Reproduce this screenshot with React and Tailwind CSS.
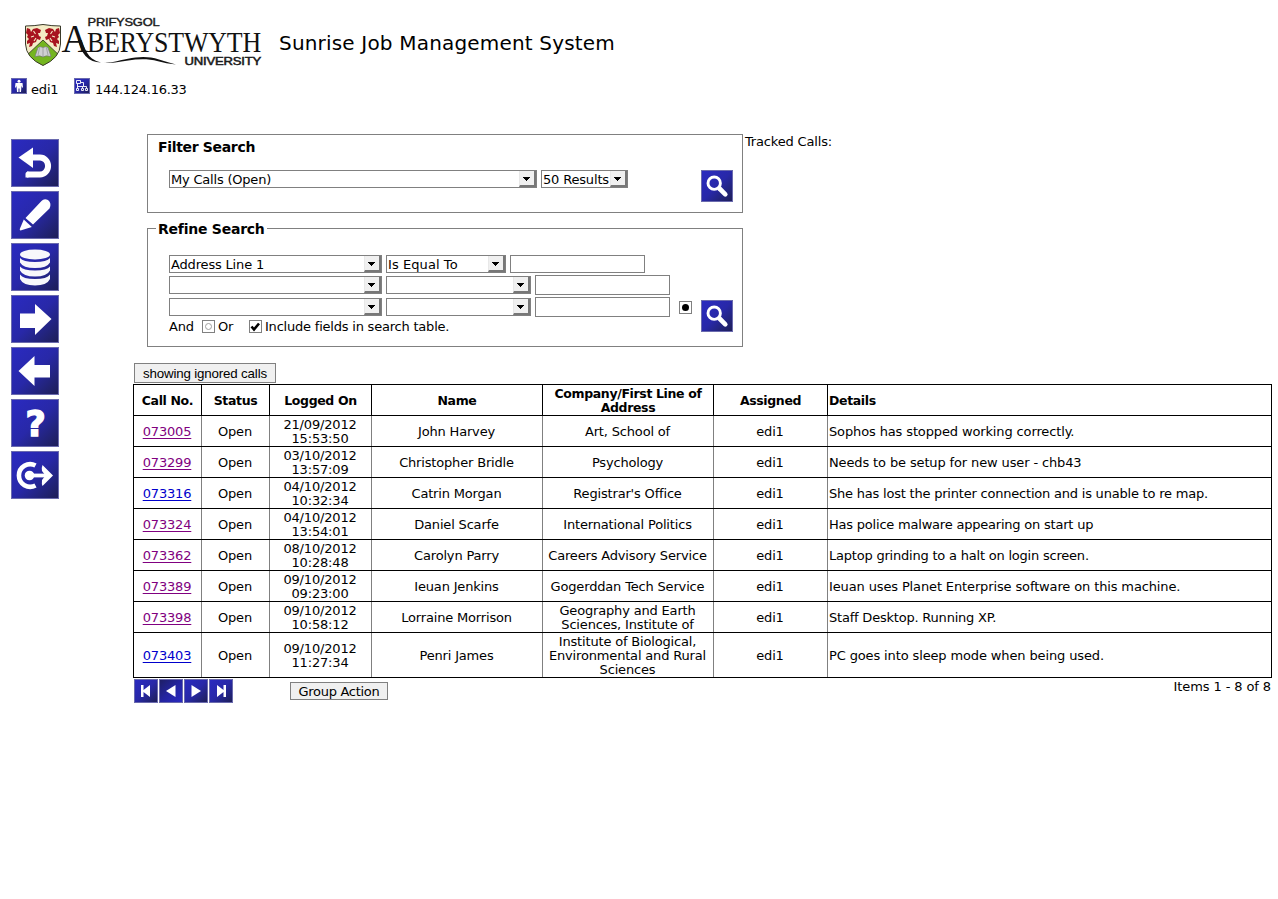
import React from "react";

function Logo() {
  return (
    <svg width="242" height="52" viewBox="22 16 242 52" className="shrink-0 overflow-visible">
      <defs>
        <clipPath id="shield">
          <path d="M25.5 26 Q34 26 43 24.5 Q52 26 60.5 26 V44 Q60 58 43 65.5 Q26 58 25.5 44 Z" />
        </clipPath>
      </defs>
      <g clipPath="url(#shield)">
        <rect x="24" y="24" width="38" height="43" fill="#f4ecc6" />
        <path d="M27 28 l3 1 1 3 2-3 4-1 4 2 -1 3 -2 0 1 3 2 1 -1 3 -3-1 -1 3 -3 1 -1 3 -3 1 1-4 -3 1 0-3 2-2 -2-2 1-2 -2-2z" fill="#a8141f" />
        <path d="M59 28 l-3 1 -1 3 -2-3 -4-1 -4 2 1 3 2 0 -1 3 -2 1 1 3 3-1 1 3 3 1 1 3 3 1 -1-4 3 1 0-3 -2-2 2-2 -1-2 2-2z" fill="#a8141f" />
        <path d="M33.500 31 l2 3 M31 37 l3-1 M36 38 l-2 3 M52.500 31 l-2 3 M55 37 l-3-1 M50 38 l2 3" stroke="#f4ecc6" strokeWidth="1.100" />
        <path d="M43 40 L62 58 V67 H24 V58 Z" fill="#74b51f" />
        <path d="M43 40 L24 58 M43 40 L62 58" stroke="#46512c" strokeWidth="1" fill="none" />
        <path d="M38 47.500 Q40.500 46 43 47.500 Q45.500 46 48 47.500 L51 56.500 Q46 55 43 57 Q40 55 35 56.500 Z" fill="#cfd0d2" stroke="#77797a" strokeWidth=".7" />
        <path d="M43 47.500 V57 M39.500 48 L38 55 M46.500 48 L48 55" stroke="#8d9092" strokeWidth=".7" />
      </g>
      <path d="M25.5 26 Q34 26 43 24.5 Q52 26 60.5 26 V44 Q60 58 43 65.5 Q26 58 25.5 44 Z" fill="none" stroke="#3a3a2a" strokeWidth="1" />
      <text x="87.500" y="26" textLength="72" lengthAdjust="spacingAndGlyphs" fontFamily="Liberation Sans" fontSize="10.400" fill="#1b1b1b" stroke="#1b1b1b" strokeWidth=".4">PRIFYSGOL</text>
      <text x="61.500" y="52" textLength="27" lengthAdjust="spacingAndGlyphs" fontFamily="Liberation Serif" fontSize="39" fill="#111">A</text>
      <text x="87" y="52" textLength="174" lengthAdjust="spacingAndGlyphs" fontFamily="Liberation Serif" fontSize="30" fill="#111">BERYSTWYTH</text>
      <path d="M78 40 L81.500 40 Q86 54 92 58.500 Q96 61.500 101 62.500 Q91.500 62.500 85.500 56 Q81 51 78 40Z" fill="#111" />
      <path d="M104 62.300 Q108 63 113 62 C128 59 142 54 159 59.500 Q167 62 176 64.500 Q166 63.500 158 61.300 C143 57 128 60.500 115 62.600 Q108 63.300 104 62.300Z" fill="#111" />
      <text x="184.500" y="65" textLength="76.500" lengthAdjust="spacingAndGlyphs" fontFamily="Liberation Sans" fontSize="10.400" fill="#1b1b1b" stroke="#1b1b1b" strokeWidth=".5">UNIVERSITY</text>
    </svg>
  );
}

const tileBase = "shrink-0 border border-[#6a6aae]";
const tile = `${tileBase} bg-linear-to-br from-[#2a2ac0] via-[#2828a8] to-[#1e1e58]`;
const tilePressed = `${tileBase} bg-linear-to-br from-[#1e1e66] via-[#2424a0] to-[#2a2ac0]`;

const sidebarIcons = [
  <g key="undo">
    <path d="M7.500 18.500 L22 8.500 V29 Z" fill="#fff" />
    <path d="M20 18.500 H29 A7.800 8.200 0 0 1 29 35.500 H16" fill="none" stroke="#fff" strokeWidth="6" strokeLinecap="butt" />
    <path d="M14.500 38.500 V35 Q14.500 32.500 17.500 32.500 V38.500Z" fill="#fff" />
  </g>,
  <g key="edit" fill="#fff">
    <path d="M14.500 27 L30.500 10 Q33 7 37 9 Q41 12 38.500 17.500 L22 33.500 Z" />
    <path d="M12.800 28.500 L20.800 36 L9.500 39.500 Q8.500 39 8.800 38 Z" />
  </g>,
  <g key="data" fill="#f7f7fb">
    <ellipse cx="24" cy="11.500" rx="15" ry="5" />
    <path d="M9 15 Q12 19 24 19 Q36 19 39 15 V19.500 Q36 25 24 25 Q12 25 9 19.500Z" />
    <path d="M9 23.500 Q12 27.500 24 27.500 Q36 27.500 39 23.500 V27.500 Q36 33.500 24 33.500 Q12 33.500 9 27.500Z" />
    <path d="M9 31.500 Q12 36 24 36 Q36 36 39 31.500 V36 Q36 42.500 24 42.500 Q12 42.500 9 36Z" />
  </g>,
  <path key="next" d="M9 18.500 H24 V9 L40.500 24 L24 40 V33 H9Z" fill="#fff" />,
  <path key="prev" d="M39 18 H23.500 V9 L7.500 24 L23.500 39 V30.500 H39Z" fill="#fff" />,
  <text key="help" x="24.500" y="37" textAnchor="middle" fontFamily="DejaVu Sans" fontWeight="bold" fontSize="35" fill="#fff" stroke="#fff" strokeWidth="1.400">?</text>,
  <g key="exit">
    <path d="M24.500 14.500 A11.300 11.300 0 1 0 24.500 34.500" fill="none" stroke="#fff" strokeWidth="4.600" />
    <circle cx="18.500" cy="24.500" r="4.800" fill="#fff" />
    <path d="M18 24.500 H36" stroke="#fff" strokeWidth="3.800" />
    <path d="M31.500 14 L42 24.500 L31.500 35 Q30.500 33 31 29 L34.500 24.500 L31 20 Q30.500 16 31.500 14Z" fill="#fff" />
  </g>,
];

function SideButton({ children }) {
  return (
    <button className={`flex h-12 w-12 items-center justify-center ${tile}`}>
      <svg width="48" height="48" viewBox="0 0 48 48" className="shrink-0">{children}</svg>
    </button>
  );
}

function SearchButton() {
  return (
    <button className={`flex h-8 w-8 items-center justify-center ${tile}`}>
      <svg width="32" height="32" viewBox="0 0 32 32" className="shrink-0" fill="none" stroke="#fff">
        <circle cx="13.200" cy="13.200" r="6.200" strokeWidth="2.900" />
        <path d="M18.500 18.500 L24.300 24.300" strokeWidth="4.600" strokeLinecap="round" />
      </svg>
    </button>
  );
}

function Select({ width, children = "" }) {
  return (
    <div className={`flex h-[18px] shrink-0 border border-[#808080] ${width}`}>
      <span className="min-w-0 flex-1 overflow-hidden pl-px leading-[17px] whitespace-nowrap">{children}</span>
      <span className="flex h-4 w-[17px] shrink-0 items-start border-r-2 border-b-2 border-l border-[#777] border-l-[#e8e8e8] bg-[#f0f0f0] pt-[6px] pl-[3px]">
        <svg width="7" height="4" viewBox="0 0 7 4" className="shrink-0" shapeRendering="crispEdges"><path d="M0 0H7V1H6V2H5V3H4V4H3V3H2V2H1V1H0Z" /></svg>
      </span>
    </div>
  );
}

const Field = ({ height }) => <div className={`w-[135px] shrink-0 border border-[#808080] bg-white ${height}`} />;

const loose = "tracking-[-0.13px]";
const tight = "tracking-[-0.21px]";

const rows = [
  ["073005", "21/09/2012", "15:53:50", "John Harvey", "Art, School of", "Sophos has stopped working correctly.", true, loose],
  ["073299", "03/10/2012", "13:57:09", "Christopher Bridle", "Psychology", "Needs to be setup for new user - chb43", true, loose],
  ["073316", "04/10/2012", "10:32:34", "Catrin Morgan", "Registrar's Office", "She has lost the printer connection and is unable to re map.", false, tight],
  ["073324", "04/10/2012", "13:54:01", "Daniel Scarfe", "International Politics", "Has police malware appearing on start up", true, tight],
  ["073362", "08/10/2012", "10:28:48", "Carolyn Parry", "Careers Advisory Service", "Laptop grinding to a halt on login screen.", true, tight],
  ["073389", "09/10/2012", "09:23:00", "Ieuan Jenkins", "Gogerddan Tech Service", "Ieuan uses Planet Enterprise software on this machine.", true, loose],
  ["073398", "09/10/2012", "10:58:12", "Lorraine Morrison", "Geography and Earth\nSciences, Institute of", "Staff Desktop. Running XP.", true, tight],
  ["073403", "09/10/2012", "11:27:34", "Penri James", "Institute of Biological,\nEnvironmental and Rural\nSciences", "PC goes into sleep mode when being used.", false, loose],
];

const grid = "grid grid-cols-[68px_68px_102px_171px_171px_114px_444px] border-b border-black";

function Cell({ children, left, head, last }) {
  const align = left ? "justify-start pl-px" : head ? "justify-center text-center" : "justify-center pr-px text-center";
  return (
    <div className={`flex items-center border-r pt-[2px] whitespace-pre ${align} ${head || last ? "border-black" : "border-[#808080]"}`}>
      {children}
    </div>
  );
}

function CallTable() {
  return (
    <div className="mt-px w-[1139px] border-t border-l border-black leading-[14px]">
      <div className={`h-[31px] text-[12.500px] font-bold tracking-[-0.36px] ${grid}`}>
        <Cell head>Call No.</Cell>
        <Cell head>Status</Cell>
        <Cell head>Logged On</Cell>
        <Cell head>Name</Cell>
        <Cell head>{"Company/First Line of\nAddress"}</Cell>
        <Cell head>Assigned</Cell>
        <Cell head left>Details</Cell>
      </div>
      {rows.map(([id, date, time, name, company, details, visited, tracking], i) => (
        <div key={id} className={`${i === 7 ? "h-[45px]" : "h-[31px]"} ${grid}`}>
          <Cell><a className={`underline underline-offset-2 ${visited ? "text-[#800080]" : "text-[#0000cc]"}`}>{id}</a></Cell>
          <Cell>Open</Cell>
          <Cell>{date + "\n" + time}</Cell>
          <Cell>{name}</Cell>
          <Cell>{company}</Cell>
          <Cell>edi1</Cell>
          <Cell left last><span className={tracking}>{details}</span></Cell>
        </div>
      ))}
    </div>
  );
}

const pagerIcons = [
  "M7 6H9.500V11L16 6V18L9.500 13V18H7Z",
  "M7 12L16.500 6V18Z",
  "M17 12L7.500 6V18Z",
  "M17 6H14.500V11L8 6V18L14.500 13V18H17Z",
];

export default function App() {
  return (
    <div className="h-[899px] w-[1278px] overflow-hidden bg-white font-['DejaVu_Sans',sans-serif] text-[13px] leading-4 tracking-[-0.17px] text-black">
      <header className="flex h-[77px] pt-4 pl-[22px]">
        <Logo />
        <h1 className="pt-[15px] pl-[15px] text-[20px] leading-6 tracking-[0.18px] whitespace-nowrap">Sunrise Job Management System</h1>
      </header>
      <div className="flex h-[57px] items-start pt-px pl-[11px]">
        <span className={`flex h-4 w-4 items-center justify-center ${tile}`}>
          <svg width="16" height="16" viewBox="0 0 16 16" className="shrink-0" fill="#fff"><circle cx="8" cy="3.300" r="1.500" /><path d="M4.500 5H11.500L12 9.500H11L10.500 7.500L10 14H8.500V10.500H7.500V14H6L5.500 7.500L5 9.500H4Z" /></svg>
        </span>
        <span className="w-[47px] pt-[4px] pl-1">edi1</span>
        <span className={`flex h-4 w-4 items-center justify-center ${tile}`}>
          <svg width="16" height="16" viewBox="0 0 16 16" className="shrink-0" fill="none" stroke="#fff"><path d="M2.500 2.500H6.500V5.500H2.500ZM2.500 10.500H4.500V12.500H2.500ZM7.500 10.500H9.500V12.500H7.500ZM11.500 10.500H13.500V12.500H11.500ZM3.500 6V10M3.500 8.500H12.500V10M8.500 8.500V10M7 4.500H9.500V8" strokeWidth=".9" /></svg>
        </span>
        <span className="pt-[4px] pl-[5px] tracking-[-0.28px]">144.124.16.33</span>
      </div>
      <div className="flex">
        <nav className="flex w-[133px] shrink-0 flex-col gap-1 pt-[5px] pl-[11px]">
          {sidebarIcons.map((icon) => <SideButton key={icon.key}>{icon}</SideButton>)}
        </nav>
        <main className="w-[1139px] shrink-0">
          <div className="flex pl-[14px]">
            <div className="flex w-[596px] shrink-0 flex-col gap-[15px]">
              <section className="h-[79px] border border-[#808080]">
                <h2 className="pt-1 pl-[10px] text-[14px] font-bold tracking-[-0.33px]">Filter Search</h2>
                <div className="mt-[15px] flex pl-[21px]">
                  <Select width="w-[368px] mr-1"><span className="tracking-[-0.2px]">My Calls (Open)</span></Select>
                  <Select width="w-[87px] mr-[73px]">50 Results</Select>
                  <SearchButton />
                </div>
              </section>
              <section className="h-[119px] border border-[#808080]">
                <h2 className="-mt-2 ml-2 w-[111px] bg-white pl-[2px] text-[14px] font-bold tracking-[-0.24px] whitespace-nowrap">Refine Search</h2>
                <div className="mt-[18px] flex pl-[21px]">
                  <div className="flex w-[532px] shrink-0 flex-col">
                    <div className="flex h-5 gap-1">
                      <Select width="w-[213px]">Address Line 1</Select>
                      <Select width="w-[120px]"><span className="tracking-[0.08px]">Is Equal To</span></Select>
                      <Field height="h-[18px]" />
                    </div>
                    <div className="flex h-[22px] gap-1">
                      <div className="pt-px"><Select width="w-[213px]" /></div>
                      <div className="pt-px"><Select width="w-[145px]" /></div>
                      <Field height="h-5" />
                    </div>
                    <div className="flex h-[22px] gap-1">
                      <div className="pt-px"><Select width="w-[213px]" /></div>
                      <div className="pt-px"><Select width="w-[145px]" /></div>
                      <Field height="h-5" />
                      <span className="mt-1 ml-[5px] flex h-[13px] w-[13px] shrink-0 items-center justify-center border border-[#808080]"><span className="h-[7px] w-[7px] rounded-full bg-black" /></span>
                    </div>
                    <div className="flex">
                      <span className="w-[33px]">And</span>
                      <span className="mt-px mr-[3px] flex h-[13px] w-[13px] items-center justify-center border border-[#808080]"><span className="h-[7px] w-[7px] rounded-full border border-[#a0a0a0]" /></span>
                      <span className="w-[31px]">Or</span>
                      <span className="mt-px mr-[3px] flex h-[13px] w-[13px] items-center justify-center border border-[#808080]"><svg width="11" height="11" viewBox="0 0 11 11"><path d="M1.500 5.500L4 8.500L9 2.500" fill="none" stroke="#000" strokeWidth="2.600" /></svg></span>
                      <span className="tracking-[-0.21px] whitespace-nowrap">Include fields in search table.</span>
                    </div>
                  </div>
                  <div className="pt-[45px]"><SearchButton /></div>
                </div>
              </section>
            </div>
            <span className="pl-[2px]">Tracked Calls:</span>
          </div>
          <button className="mt-4 ml-px block h-5 w-[142px] border border-[#808080] bg-[#f0f0f0] pt-px font-['Liberation_Sans',sans-serif] text-[13.333px] leading-[17px] whitespace-nowrap">showing ignored calls</button>
          <CallTable />
          <footer className="flex pt-px pl-px">
            <div className="flex gap-px">
              {pagerIcons.map((d, i) => (
                <button key={d} className={`flex h-6 w-6 items-center justify-center ${i === 1 ? tilePressed : tile}`}>
                  <svg width="24" height="24" viewBox="0 0 24 24" className="shrink-0"><path d={d} fill="#fff" /></svg>
                </button>
              ))}
            </div>
            <button className="mt-[3px] ml-[57px] h-[18px] w-[98px] border border-[#808080] bg-[#f0f0f0] pt-px leading-[15px] tracking-[-0.3px] whitespace-nowrap">Group Action</button>
            <span className="ml-auto pr-px tracking-[-0.1px]">Items 1 - 8 of 8</span>
          </footer>
        </main>
      </div>
    </div>
  );
}
